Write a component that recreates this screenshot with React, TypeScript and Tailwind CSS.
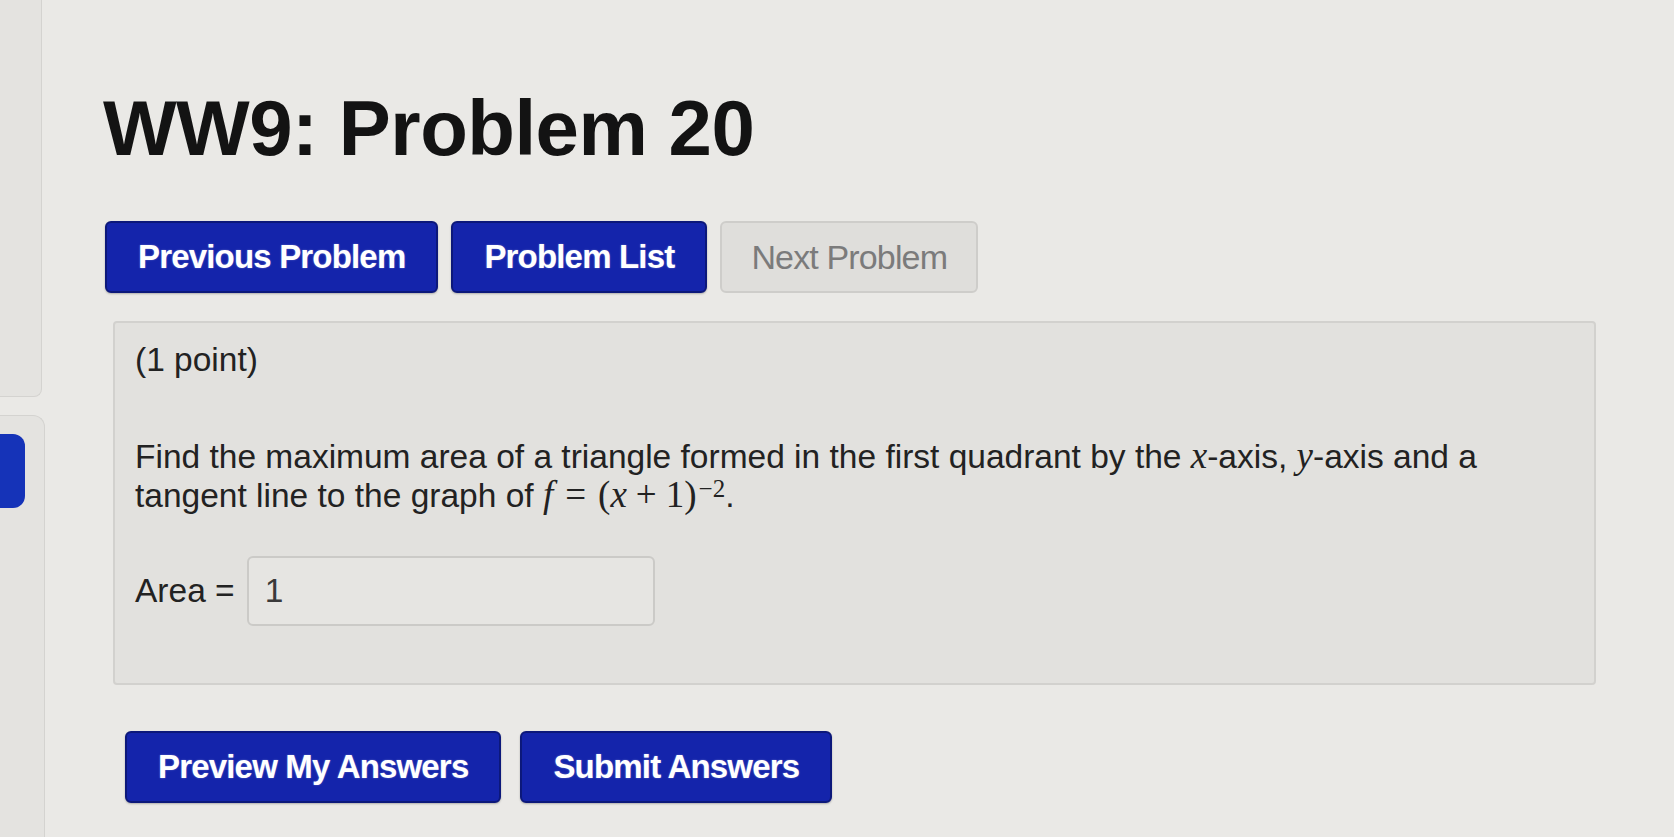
const blueBtn =
  'h-[72px] px-[31px] rounded-md bg-[#1424ab] border-2 border-[#0c187a] text-white text-[33px] font-bold tracking-tight [text-shadow:0_0_2px_rgba(255,255,255,0.35)] shadow-[0_1px_2px_rgba(0,0,0,0.25)]'

function Sidebar() {
  return (
    <div className="w-[46px] shrink-0 flex flex-col">
      <div className="h-[397px] w-[42px] bg-[#e4e3e0] border-r border-b border-[#d4d3d0] rounded-br-lg" />
      <div className="mt-[18px] flex-1 w-[45px] bg-[#e4e3e0] border-r border-t border-[#d4d3d0] rounded-tr-xl pt-[18px]">
        <div className="w-[25px] h-[74px] bg-[#1533b8] rounded-r-[12px]" />
      </div>
    </div>
  )
}

function Math({ children }: { children: React.ReactNode }) {
  return <span className="font-['Liberation_Serif','DejaVu_Serif',serif] text-[37px] leading-none">{children}</span>
}

export default function App() {
  return (
    <div className="w-[1674px] h-[837px] overflow-hidden flex bg-[#eae9e6] font-['Liberation_Sans',Arial,sans-serif] text-[#222]">
      <Sidebar />
      <main className="flex-1 pl-[57px] pr-[78px]">
        <h1 className="mt-[89px] text-[78px] leading-none font-bold text-[#131313] tracking-[-0.5px]">
          WW9: Problem 20
        </h1>

        <div className="mt-[54px] ml-[2px] flex items-center gap-[13px]">
          <button className={blueBtn}>Previous Problem</button>
          <button className={blueBtn}>Problem List</button>
          <button className="h-[72px] px-[29px] rounded-md bg-[#dfdedb] border-2 border-[#cecdca] text-[#7b7b7b] text-[34px] tracking-tight">
            Next Problem
          </button>
        </div>

        <section className="mt-[28px] ml-[10px] h-[364px] bg-[#e2e1de] border-2 border-[#d2d1ce] rounded-sm px-[20px] pt-[18px] text-[33.5px] leading-[38px]">
          <p>(1 point)</p>
          <p className="mt-[58px]">
            Find the maximum area of a triangle formed in the first quadrant by the <Math><i>x</i></Math>-axis,{' '}
            <Math><i>y</i></Math>-axis and a
            <br />
            tangent line to the graph of{' '}
            <Math>
              <i>f</i>
              <span className="mx-[12px]">=</span>(<i>x</i>
              <span className="mx-[9px]">+</span>1)<sup className="text-[25px] leading-none -top-[10px] ml-[2px]">−2</sup>
            </Math>
            .
          </p>
          <div className="mt-[41px] flex items-center gap-[12px]">
            <span>Area =</span>
            <div className="w-[408px] h-[70px] bg-[#e6e5e2] border-2 border-[#cbcac7] rounded-md px-[16px] flex items-center text-[#3a3a3a]">
              1
            </div>
          </div>
        </section>

        <div className="mt-[46px] ml-[22px] flex items-center gap-[19px]">
          <button className={blueBtn}>Preview My Answers</button>
          <button className={blueBtn}>Submit Answers</button>
        </div>
      </main>
    </div>
  )
}
